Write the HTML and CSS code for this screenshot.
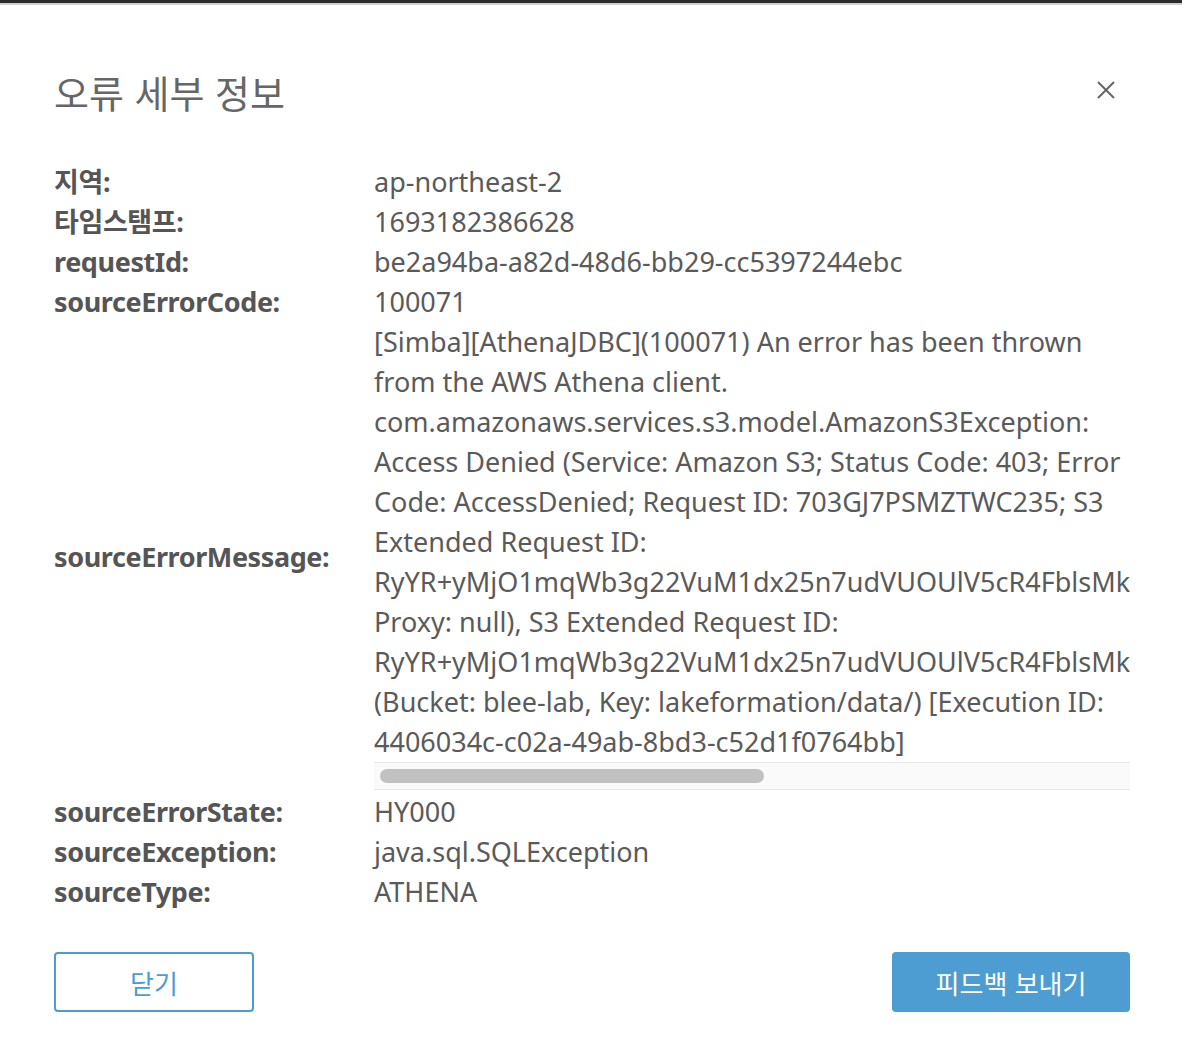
FILE: index.html
```html
<!DOCTYPE html>
<html lang="ko">
<head>
<meta charset="utf-8">
<title>오류 세부 정보</title>
<link rel="stylesheet" href="styles.css">
</head>
<body>
<div class="topbar"></div>
<div class="modal">
  <div class="header">
    <h1 class="title">오류 세부 정보</h1>
    <button class="close" aria-label="닫기">
      <svg width="18" height="18" viewBox="0 0 18 18"><path d="M1 1L17 17M17 1L1 17" stroke="#666" stroke-width="2" fill="none"/></svg>
    </button>
  </div>
  <dl class="details">
    <dt>지역:</dt><dd>ap-northeast-2</dd>
    <dt>타임스탬프:</dt><dd>1693182386628</dd>
    <dt>requestId:</dt><dd>be2a94ba-a82d-48d6-bb29-cc5397244ebc</dd>
    <dt>sourceErrorCode:</dt><dd>100071</dd>
    <dt class="mid">sourceErrorMessage:</dt>
    <dd class="scroll">
      <div class="msg"><span class="ln">[Simba][AthenaJDBC](100071) An error has been thrown</span><span class="ln">from the AWS Athena client.</span><span class="ln">com.amazonaws.services.s3.model.AmazonS3Exception:</span><span class="ln">Access Denied (Service: Amazon S3; Status Code: 403; Error</span><span class="ln">Code: AccessDenied; Request ID: 703GJ7PSMZTWC235; S3</span><span class="ln">Extended Request ID:</span><span class="ln">RyYR+yMjO1mqWb3g22VuM1dx25n7udVUOUlV5cR4FblsMk8TnZpLw0aHdE9sYcVbG2uJ4rKfQ6mNtWzA=;</span><span class="ln">Proxy: null), S3 Extended Request ID:</span><span class="ln">RyYR+yMjO1mqWb3g22VuM1dx25n7udVUOUlV5cR4FblsMk8TnZpLw0aHdE9sYcVbG2uJ4rKfQ6mNtWzA=</span><span class="ln">(Bucket: blee-lab, Key: lakeformation/data/) [Execution ID:</span><span class="ln">4406034c-c02a-49ab-8bd3-c52d1f0764bb]</span></div>
      <div class="hscroll"><div class="thumb"></div></div>
    </dd>
    <dt>sourceErrorState:</dt><dd>HY000</dd>
    <dt>sourceException:</dt><dd>java.sql.SQLException</dd>
    <dt>sourceType:</dt><dd>ATHENA</dd>
  </dl>
  <div class="footer">
    <button class="btn btn-outline">닫기</button>
    <button class="btn btn-primary">피드백 보내기</button>
  </div>
</div>
</body>
</html>
```
FILE: styles.css
```css
html, body {
  margin: 0;
  padding: 0;
  background: #fff;
}
body {
  font-family: "Noto Sans", "Noto Sans CJK KR", sans-serif;
  color: #5a5a5a;
}
.topbar {
  height: 3px;
  background: #2b2b2b;
  border-bottom: 2px solid #cfcfcf;
}
.modal {
  padding: 65px 52px 0 54px;
}
.header {
  display: flex;
  align-items: center;
  justify-content: space-between;
  height: 44px;
}
.title {
  margin: 0;
  font-family: "Noto Sans CJK KR", "Noto Sans", sans-serif;
  font-weight: 400;
  font-size: 38px;
  line-height: 44px;
  color: #666;
}
.close {
  border: 0;
  background: none;
  padding: 0;
  margin: 0 15px 4px 0;
  width: 18px;
  height: 18px;
  display: flex;
  cursor: pointer;
}
.details {
  margin: 48px 0 0;
  display: grid;
  grid-template-columns: 320px minmax(0, 1fr);
  font-size: 27px;
  line-height: 40px;
}
.details dt {
  font-weight: 700;
  color: #555;
  font-family: "Noto Sans", "Noto Sans CJK KR", sans-serif;
  letter-spacing: -0.4px;
}
.details dt.mid {
  align-self: center;
}
.details dd {
  margin: 0;
  color: #5a5a5a;
  white-space: nowrap;
}
.details dd.scroll {
  overflow: hidden;
  margin-bottom: 2px;
}
.msg {
  display: flex;
  flex-direction: column;
}
.ln {
  white-space: nowrap;
}
.hscroll {
  height: 26px;
  background: #fafafa;
  border-top: 1px solid #e6e6e6;
  border-bottom: 1px solid #e6e6e6;
  display: flex;
  align-items: center;
  padding-left: 6px;
}
.thumb {
  width: 384px;
  height: 14px;
  border-radius: 7px;
  background: #c1c1c1;
}
.footer {
  margin-top: 40px;
  display: flex;
  justify-content: space-between;
}
.btn {
  height: 60px;
  border-radius: 4px;
  font-family: "Noto Sans CJK KR", "Noto Sans", sans-serif;
  font-size: 26px;
  cursor: pointer;
}
.btn-outline {
  width: 200px;
  background: #fff;
  border: 2px solid #4a9dd3;
  color: #4a9dd3;
}
.btn-primary {
  width: 238px;
  background: #4d9dd2;
  border: 0;
  color: #fff;
}
```
